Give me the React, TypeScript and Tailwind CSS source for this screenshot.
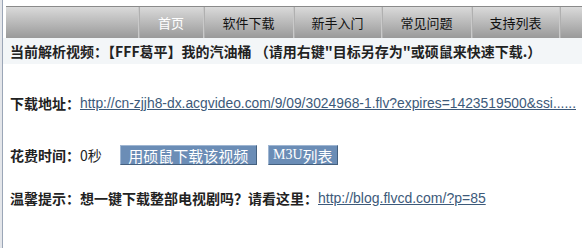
import React from "react";

const cjk = '"Noto Sans CJK SC", "Liberation Sans", sans-serif';
const arial = '"Liberation Sans", Arial, sans-serif';

const navItems = [
  { label: "首页", w: "w-[65px]", active: true },
  { label: "软件下载", w: "w-[90px]" },
  { label: "新手入门", w: "w-[88px]" },
  { label: "常见问题", w: "w-[90px]" },
  { label: "支持列表", w: "w-[88px]" },
  { label: "十", w: "w-[60px]" },
];

export default function App() {
  return (
    <div className="flex h-[248px] w-[582px] overflow-hidden bg-white" style={{ fontFamily: cjk }}>
      <div className="w-[2px] shrink-0 bg-[#e4e6ea]" />
      <div className="w-px shrink-0 bg-[#9ba6b7]" />
      <div className="flex min-w-0 flex-1 flex-col">
        <div className="h-[6px] bg-white" />
        <div className="ml-[3px] flex h-[32px] border-t border-[#8a8a8a] bg-gradient-to-b from-[#dadada] to-[#9a9a9a]">
          <div className="w-[132px] shrink-0" />
          {navItems.map((it) => (
            <div
              key={it.label}
              className={`${it.w} flex shrink-0 items-center justify-center border-l border-[#c9c9c9] text-[13px] leading-none ${it.active ? "text-white" : "text-[#111]"}`}
              style={{ boxShadow: "inset 1px 0 0 #b0b0b0" }}
            >
              {it.label}
            </div>
          ))}
        </div>
        <div className="flex h-[26px] items-center bg-[#f3f6f8] pl-[7px] text-[14px] font-bold text-[#222] whitespace-nowrap">
          当前解析视频：【FFF葛平】我的汽油桶 （请用右键"目标另存为"或硕鼠来快速下载.）
        </div>
        <div className="mt-[29px] flex h-[20px] items-center pl-[7px] whitespace-nowrap">
          <span className="text-[14px] font-bold text-[#222]">下载地址：</span>
          <a
            href="#"
            className="text-[13.85px] text-[#3d5a7a] underline"
            style={{ fontFamily: arial }}
          >
            http://cn-zjjh8-dx.acgvideo.com/9/09/3024968-1.flv?expires=1423519500&amp;ssi......
          </a>
        </div>
        <div className="mt-[32px] flex h-[20px] items-center pl-[7px] whitespace-nowrap">
          <span className="text-[14px] font-bold text-[#222]">花费时间：</span>
          <span className="text-[14px] text-[#222]">0秒</span>
          <button
            className="ml-[18px] flex h-[20px] w-[137px] items-center justify-center border border-t-[#9fb6d2] border-l-[#9fb6d2] border-b-[#44607f] border-r-[#44607f] bg-[#6b8db6] text-[15px] leading-none text-white"
          >
            用硕鼠下载该视频
          </button>
          <button
            className="ml-[11px] flex h-[20px] w-[70px] items-center justify-center border border-t-[#9fb6d2] border-l-[#9fb6d2] border-b-[#44607f] border-r-[#44607f] bg-[#6b8db6] text-[15px] leading-none text-white"
          >
            <span style={{ fontFamily: '"Liberation Serif", serif' }} className="text-[14px]">M3U</span>列表
          </button>
        </div>
        <div className="mt-[23px] flex h-[20px] items-center pl-[7px] whitespace-nowrap">
          <span className="text-[14px] font-bold text-[#222]">温馨提示：想一键下载整部电视剧吗？请看这里：</span>
          <a href="#" className="text-[14px] text-[#3d5a7a] underline" style={{ fontFamily: arial }}>
            http://blog.flvcd.com/?p=85
          </a>
        </div>
      </div>
    </div>
  );
}
